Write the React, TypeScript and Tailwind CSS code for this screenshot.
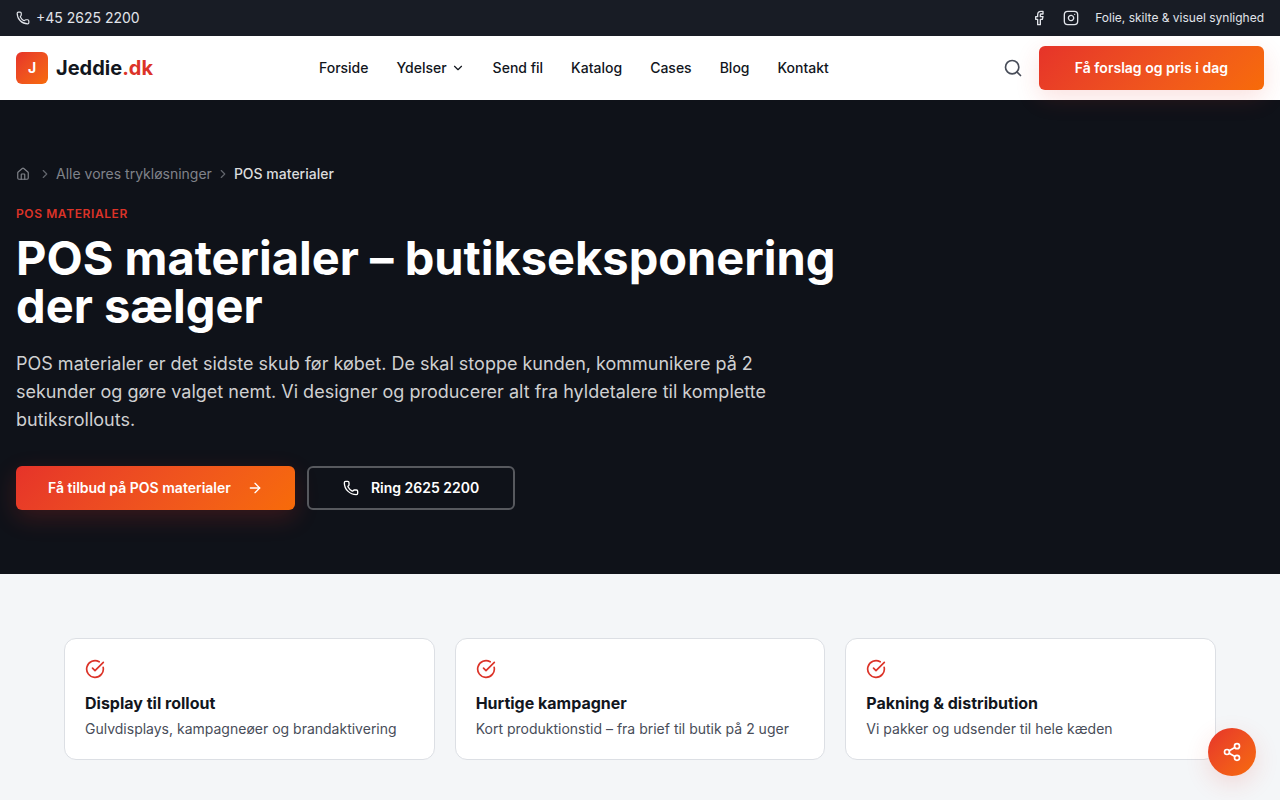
import {
  ArrowRight,
  ChevronDown,
  ChevronRight,
  CircleCheckBig,
  Facebook,
  House,
  Instagram,
  Phone,
  Search,
  Share2,
} from "lucide-react";

const navItems = [
  { label: "Forside" },
  { label: "Ydelser", menu: true },
  { label: "Send fil" },
  { label: "Katalog" },
  { label: "Cases" },
  { label: "Blog" },
  { label: "Kontakt" },
];

const features = [
  { title: "Display til rollout", text: "Gulvdisplays, kampagneøer og brandaktivering" },
  { title: "Hurtige kampagner", text: "Kort produktionstid – fra brief til butik på 2 uger" },
  { title: "Pakning & distribution", text: "Vi pakker og udsender til hele kæden" },
];

function TopBar() {
  return (
    <div className="flex h-9 items-center justify-between bg-[#181c25] px-4 text-[#e1e4ea]">
      <a href="#telefon" className="flex items-center gap-1.5 text-sm">
        <Phone size={14} />
        +45 2625 2200
      </a>
      <div className="flex items-center gap-4 text-xs">
        <a href="#facebook" aria-label="Facebook">
          <Facebook size={16} />
        </a>
        <a href="#instagram" aria-label="Instagram">
          <Instagram size={16} />
        </a>
        <span>Folie, skilte &amp; visuel synlighed</span>
      </div>
    </div>
  );
}

function Header() {
  return (
    <header className="relative z-10 flex h-16 items-center justify-between bg-white px-4">
      <a href="#forside" className="flex items-center gap-2">
        <span className="flex size-8 items-center justify-center rounded-md bg-linear-135 from-[#e63329] to-[#f76b08] text-sm font-bold text-white">
          J
        </span>
        <span className="text-xl font-bold">
          Jeddie<span className="text-[#dc3328]">.dk</span>
        </span>
      </a>
      <nav className="flex items-center gap-7 text-sm font-medium">
        {navItems.map((item) =>
          item.menu ? (
            <button key={item.label} type="button" className="flex items-center gap-1">
              {item.label}
              <ChevronDown size={14} />
            </button>
          ) : (
            <a key={item.label} href="#side">
              {item.label}
            </a>
          ),
        )}
      </nav>
      <div className="flex items-center gap-2">
        <button type="button" aria-label="Søg" className="p-2 text-[#484d59]">
          <Search size={20} />
        </button>
        <a
          href="#tilbud"
          className="flex h-11 items-center rounded-md bg-linear-135 from-[#e63329] to-[#f76b08] px-9 text-sm font-semibold text-white shadow-[0_8px_24px_rgba(230,51,41,0.15)]"
        >
          Få forslag og pris i dag
        </a>
      </div>
    </header>
  );
}

function Hero() {
  return (
    <section className="bg-[#0f1219] px-4 py-16 text-white">
      <nav aria-label="Brødkrumme" className="flex items-center gap-1 text-sm text-[#80838a]">
        <a href="#forside" aria-label="Forside" className="mr-1">
          <House size={14} />
        </a>
        <ChevronRight size={14} className="text-[#62656c]" />
        <a href="#losninger">Alle vores trykløsninger</a>
        <ChevronRight size={14} className="text-[#62656c]" />
        <span className="font-medium text-[#dbdcdd]">POS materialer</span>
      </nav>
      <p className="mt-[22px] text-xs font-semibold tracking-wider text-[#dc3328] uppercase">
        POS materialer
      </p>
      <h1 className="mt-3 max-w-4xl text-[47px] leading-12 font-bold">
        POS materialer – butikseksponering
        <br />
        der sælger
      </h1>
      <p className="mt-5 max-w-[768px] text-lg leading-7 text-[#cfd0d1]">
        POS materialer er det sidste skub før købet. De skal stoppe kunden, kommunikere på 2
        sekunder og gøre valget nemt. Vi designer og producerer alt fra hyldetalere til komplette
        butiksrollouts.
      </p>
      <div className="mt-8 flex flex-wrap gap-3 text-sm font-semibold">
        <a
          href="#tilbud"
          className="flex h-11 items-center gap-4 rounded-md bg-linear-135 from-[#e63329] to-[#f76b08] px-8 shadow-[0_8px_24px_rgba(230,51,41,0.2)]"
        >
          Få tilbud på POS materialer
          <ArrowRight size={16} />
        </a>
        <a
          href="#telefon"
          className="flex h-11 items-center gap-3 rounded-md border-2 border-[#57595e] px-[34px]"
        >
          <Phone size={16} />
          Ring 2625 2200
        </a>
      </div>
    </section>
  );
}

function Features() {
  return (
    <section className="px-4 py-16">
      <div className="mx-auto grid max-w-6xl grid-cols-3 gap-5">
        {features.map((feature) => (
          <article key={feature.title} className="rounded-xl border border-[#dcdfe4] bg-white p-5">
            <CircleCheckBig size={20} className="text-[#dc3328]" />
            <h2 className="mt-3 text-base font-bold">{feature.title}</h2>
            <p className="mt-1 text-sm text-[#484d59]">{feature.text}</p>
          </article>
        ))}
      </div>
    </section>
  );
}

export default function App() {
  return (
    <div className="min-h-screen bg-[#f4f6f8] font-['Inter',sans-serif] text-[#12161d]">
      <TopBar />
      <Header />
      <main>
        <Hero />
        <Features />
      </main>
      <button
        type="button"
        aria-label="Del"
        className="fixed right-6 bottom-6 flex size-12 items-center justify-center rounded-full bg-linear-135 from-[#e63329] to-[#f76b08] text-white shadow-[0_8px_24px_rgba(230,51,41,0.15)]"
      >
        <Share2 size={20} />
      </button>
    </div>
  );
}
